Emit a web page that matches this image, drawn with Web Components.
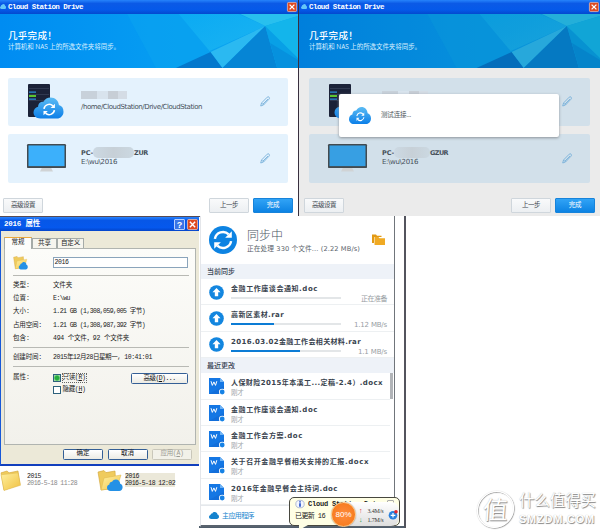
<!DOCTYPE html>
<html lang="zh-CN"><head><meta charset="utf-8"><title>Cloud Station Drive</title>
<style>
html,body{margin:0;padding:0}
body{width:600px;height:531px;overflow:hidden;background:#fff;font-family:"Open Sans","Noto Sans CJK SC",sans-serif;font-size:7px;line-height:1}
</style></head><body><desk-top></desk-top>
<script>
const make=(name,html,init)=>customElements.define(name,class extends HTMLElement{
  constructor(){super();this.attachShadow({mode:'open'});const t=document.createElement('template');
    t.innerHTML=typeof html==='function'?html(this):html;this.shadowRoot.append(t.content.cloneNode(true));}
  connectedCallback(){init&&init(this)}
});
const cloud='M7 21C2.5 21 0 18 0 15c0-3 2-5.2 4.6-5.8C4.600 6 7 4 9.800 4.200 11.500 1.500 14 0 17 0c4.800 0 8 3.300 8.400 7.600C28.500 8.300 30 11 30 14.200 30 18 27 21 23.500 21z';
const arrows='<g fill="none" stroke="#fff" stroke-width="1.700"><path d="M-5.700 -.8A5.800 5.800 0 0 1 4 -4M5.700 .8A5.800 5.800 0 0 1 -4 4"/></g><path fill="#fff" d="M6.200-6.200v4.700H1.500zM-6.200 6.200V1.500H-1.500z"/>';

/* Icons */
make('ui-icon',h=>{
 const n=h.getAttribute('name');
 const I={
  sync:['0 0 30 21',`<linearGradient id="g" x2="0" y2="1"><stop stop-color="#5cbcf4"/><stop offset="1" stop-color="#0c7fe8"/></linearGradient><path fill="url(#g)" d="${cloud}"/><g transform="translate(15.500 12) scale(.85)">${arrows}</g>`],
  cloud:['0 0 30 21',`<path fill="currentColor" d="${cloud}"/>`],
  server:['0 0 37 36',`<rect width="22" height="33" rx="1" fill="#1b2238"/><path fill="#303950" d="M1 4h20v1H1zM1 10h20v1H1zM1 16h20v1H1z"/><path fill="#2b8ed8" d="M1 7.500h7v1.200H1zM1 14.500h7v1.200H1z"/><path fill="#5cc431" d="M1 11h7v2H1z"/><linearGradient id="g" x2="0" y2="1"><stop stop-color="#5cbcf4"/><stop offset="1" stop-color="#0c7fe8"/></linearGradient><g transform="translate(5.500 13.500)"><path fill="url(#g)" d="${cloud}"/><g transform="translate(15.700 12) scale(.92)">${arrows}</g></g>`],
  monitor:['0 0 39 29','<path fill="#d0d3d5" d="M15 24h9l2 4H13z"/><rect width="39" height="24.500" rx="1.200" fill="#434b50"/><rect x="1.500" y="1.500" width="36" height="21" fill="var(--screen,#3cb0fb)"/>'],
  pencil:['0 0 10 11','<path fill="none" stroke="#74afd9" stroke-width=".85" d="M.7 10 1.500 7 7.200 1.200Q8.200.2 9.100 1.200 10 2.200 9 3.200L3.500 9zM1.600 7l1.900 2M3 8 8 3"/>'],
  folder:['0 0 21 22','<linearGradient id="g" x2="1" y2="1"><stop stop-color="#fff0a0"/><stop offset="1" stop-color="#f0c040"/></linearGradient><path fill="#efcb5d" stroke="#d2a234" stroke-width=".6" d="M1 3 7 1l2 2 9-2 2 14L4 21z"/><path fill="url(#g)" stroke="#ddb44a" stroke-width=".5" d="M1 5 18 3l2.500 13L4 21.500z"/>'],
  synced:['0 0 26 22','<linearGradient id="g" x2="1" y2="1"><stop stop-color="#fff0a0"/><stop offset="1" stop-color="#f2c64c"/></linearGradient><path fill="#efcb5d" stroke="#d2a234" stroke-width=".6" d="M1 2 7 .6l2 2 9-1.600 1 17L4 20z"/><path fill="url(#g)" stroke="#ddb44a" stroke-width=".5" d="M4 20 7 8l17-3-4 13z"/><g transform="translate(10 9.500) scale(.52 .55)"><path fill="#2491e6" d="'+cloud+'"/></g>'],
  refresh:['-14 -14 28 28','<circle r="14" fill="#0d83e2"/><g transform="scale(1.420)">'+arrows+'</g>'],
  up:['-8 -8 16 16','<circle r="7.800" fill="#1386df"/><path fill="#fff" d="M0-4.700 4.300-.2H1.800V4H-1.800V-.2H-4.300z"/>'],
  orange:['0 0 13 12','<path fill="#e29a16" d="M0 .5h4l1 1.200h4.500V3H2v6H0z"/><path fill="#f0aa24" d="M2.500 3h4l1 1.200H13V11H2.500z"/>'],
  word:['0 0 16 17','<path fill="#1477e4" d="M0 0h11l4 4v12H0z"/><path fill="#70b4f5" d="M11 0v4h4z"/><path fill="#1065d0" d="M0 16 15 8v8z" opacity=".5"/><path d="M2 3.200 3.300 7.400 4.900 3.900 6.500 7.400 7.800 3.200" fill="none" stroke="#fff" stroke-width="1"/><circle cx="13.200" cy="14" r="3.200" fill="#fff"/><circle cx="13.200" cy="14" r="2.400" fill="#1682e5"/>'],
  close:['0 0 10 10','<rect x=".4" y=".4" width="9.200" height="9.200" rx="1.200" fill="#df4a21" stroke="#f2c7b8" stroke-width=".7"/><path stroke="#fff" stroke-width="1.300" d="m2.600 2.600 4.800 4.800m0-4.800L2.600 7.400"/>'],
  info:['0 0 10 10','<circle cx="5" cy="4.500" r="4.200" fill="#f4f7ff" stroke="#8d9cc4" stroke-width=".7"/><path stroke="#1a49c8" stroke-width="1.600" d="M5 3.700v3.700M5 1.300v1.500"/>'],
  plus:['0 0 10 10','<circle cx="5" cy="5.300" r="4.300" fill="#2a80dc"/><path stroke="#fff" stroke-width="1.200" d="M5 3v4.600M2.700 5.300h4.600"/><circle cx="8" cy="1.800" r="1.800" fill="#e3252b"/>'],
  facets:['0 0 300 54',`<linearGradient id="b" x2="1"><stop stop-color="#008cf2"/><stop offset=".5" stop-color="#059bf2"/><stop offset="1" stop-color="#0ba6ee"/></linearGradient><linearGradient id="l" x2="1" y2="1"><stop stop-color="#0db1f5"/><stop offset="1" stop-color="#25bdf2"/></linearGradient><path fill="url(#b)" d="M0 0h300v54H0z"/><path fill="#0aa4f0" opacity=".6" d="M128 0 157 54H180L267 12 242 0z"/><path fill="url(#l)" d="M180 0 211 37 267 12 240 0z" opacity=".6"/><path fill="#0478cd" d="M177 54 212 38 224 54z"/><path fill="#2bb9f1" d="M212 38 267 12 224 54z"/><path fill="#0685d5" d="M267 12 224 54H279z"/><path fill="#08a0e6" d="M267 12 279 54H300V44z"/><path fill="#28c0ee" d="M242 0H300V2L267 12z"/><path fill="#13b5eb" d="M267 12 300 2V44z"/><path fill="#0587d8" opacity=".6" d="M279 54 272 29 300 46V54z"/>`]
 };
 return `<style>:host{display:block;flex:none}svg{display:block;width:100%;height:100%;overflow:visible}</style><svg viewBox="${I[n][0]}" preserveAspectRatio="none">${I[n][1]}</svg>`;
});

make('push-button','<style>:host{display:flex;align-items:center;justify-content:center;box-sizing:border-box;width:40px;height:15px;border:1px solid #cfd6dc;border-radius:1px;background:linear-gradient(#f9fafb,#eceff2);color:#3f4850;font-size:6.500px}:host([primary]){background:linear-gradient(#31a3f6,#0c83e3);border-color:#1783da;color:#fff}</style><slot></slot>');

make('drive-card','<style>:host{display:grid;grid-template-columns:73px 1fr 10px;padding-right:18px;height:48.500px;background:var(--card,#e4f2fd);border-radius:2px;box-sizing:border-box}.i{padding:var(--ip)}.t{padding-top:12px;display:flex;flex-direction:column;color:#46505a}.p{align-self:center;width:10px;height:11px}</style><div class="i"><slot name="icon"></slot></div><div class="t"><slot></slot></div><ui-icon class="p" name="pencil"></ui-icon>');

/* Setup wizard window */
make('drive-window',h=>`<style>
:host{display:flex;flex-direction:column;box-sizing:border-box;background:var(--body,#fff);font-size:7px}
.bar{display:flex;align-items:center;height:13.500px;background:linear-gradient(#2683fb,#0b5ae6 25%,#0559e9 70%,#0349cf);color:#fff;font:bold 7.500px "Liberation Mono",monospace;flex:none;padding-left:var(--off)}
.bar .c{width:6px;height:5px;color:#64c6f8;margin-right:2px}.bar .x{width:10px;height:10px;margin-left:auto;margin-right:1.500px}
.hero{display:grid;height:54px;flex:none}.hero>*{grid-area:1/1}.hero ui-icon{height:54px;filter:var(--dim)}
.copy{z-index:1;padding:15.500px 0 0 calc(8px + var(--off));color:#fff}.h{font-size:9.500px;line-height:13px;font-weight:500}.s{font-size:6.500px;line-height:10px;color:#d8efff}
.cards{display:flex;flex-direction:column;gap:8px;padding:10px 10px 0 calc(8px + var(--off))}
.l{line-height:10px;height:9.500px;font-size:7px;font-family:"DejaVu Sans",sans-serif;display:flex}
.b{font-weight:bold;font-size:6.500px}.m{height:11px;border-radius:5px;background:linear-gradient(90deg,#ccd9e3,#c7d0d7,#cbd8e1);margin-top:-1px}
.mask{width:46px;height:8px;background:linear-gradient(90deg,#c8d1da 0 35%,#d8e3ed 35% 58%,#c7ced6 58% 80%,#d4dce5 80%);margin-top:1px}
.srv{width:37px;height:36px}.mon{width:39px;height:28.500px}
.foot{display:flex;gap:4px;padding:15.500px 5px 0 calc(3px + var(--off))}.foot>:first-child{margin-right:auto}
</style>
<div class="bar"><ui-icon class="c" name="cloud"></ui-icon><fit-text w="75">Cloud Station Drive</fit-text><ui-icon class="x" name="close"></ui-icon></div>
<div class="hero"><ui-icon name="facets"></ui-icon><div class="copy"><div class="h"><fit-text w="49">几乎完成！</fit-text></div><div class="s"><fit-text w="112">计算机和 NAS 上的所选文件夹将同步。</fit-text></div></div></div>
<div class="cards"><drive-card style="--ip:6.500px 0 0 20px"><ui-icon slot="icon" class="srv" name="server"></ui-icon><div class="l" style="height:12px"><div class="mask"></div></div><div class="l"><fit-text w="121">/home/CloudStation/Drive/CloudStation</fit-text></div></drive-card>
<drive-card style="--ip:10px 0 0 19px"><ui-icon slot="icon" class="mon" name="monitor"></ui-icon><div class="l b" style="padding-top:1.500px"><fit-text w="12">PC-</fit-text><div class="m" style="width:${h.getAttribute('gap')}px"></div><fit-text w="${h.getAttribute('tw')}">${h.getAttribute('tail')}</fit-text></div><div class="l"><fit-text w="36">E:\\wu\\2016</fit-text></div></drive-card></div>
<div class="foot"><push-button><fit-text w="24">高级设置</fit-text></push-button><push-button><fit-text w="18">上一步</fit-text></push-button><push-button primary><fit-text w="12.500">完成</fit-text></push-button></div>`);

/* File properties */
make('xp-button','<style>:host{display:flex;align-items:center;justify-content:center;box-sizing:border-box;width:40px;height:11px;border:1px solid #345f96;border-radius:1.500px;background:linear-gradient(#fff,#ecebe4);color:#111}:host([off]){border-color:#c9c7ba;color:#9b9a92;background:#f2f1e9}</style><slot></slot>');
make('props-window',()=>{const r=(k,kw,v,w)=>`<div class="r"><span class="k"><fit-text w="${kw}">${k}</fit-text></span><fit-text w="${w}">${v}</fit-text></div>`;return `<style>
:host{display:flex;flex-direction:column;box-sizing:border-box;background:#ece9d8;border-left:1px solid #1758d8;border-bottom:2px solid #113fbd;font:6.500px/8px "Liberation Mono","Noto Sans CJK SC",monospace;color:#222}
.bar{height:14px;margin-left:-1px;background:linear-gradient(#2883ff,#0757e7 25%,#0558ed 75%,#0445ca);display:flex;align-items:center;gap:2px;padding:0 1px 0 4px;color:#fff;font-weight:bold;font-size:7.500px;flex:none}.bar ui-icon{width:11px;height:11px}.q{margin-left:auto;width:9px;height:9px;border:1px solid #b6cfff;border-radius:1px;background:#3974e6;text-align:center;font:bold 9px/10px "Liberation Sans",sans-serif}
.tabs{display:flex;align-items:flex-end;padding:5.500px 0 0 3px;height:11px}.tab{box-sizing:border-box;height:10px;border:1px solid #a5aba8;border-bottom:0;background:#f6f5ee;display:flex;justify-content:center;align-items:center;width:25px;padding-top:1px}.tab.on{width:28px;height:12px;border-top:1.500px solid #ecaa3c;background:#fdfdfb;margin-bottom:-1px;z-index:1;padding-top:0}
.page{height:197px;box-sizing:border-box;margin:0 3px;border:1px solid #b0b4b0;background:linear-gradient(#fcfcf9,#f2f1eb);padding:7px 7px 0 8px;display:flex;flex-direction:column}
.top{display:flex;gap:24.500px;height:19px}.top ui-icon{width:15px;height:14px}.in{height:11px;box-sizing:border-box;width:136px;border:1px solid #8aa4bb;background:#fff;padding:1px 1px;line-height:8px;margin-top:1px}
hr{border:0;border-top:1px solid #b8b9b4;margin:0;width:176px}.r{display:flex;height:13.200px;align-items:center}.k{width:40px}
.rows{padding:4px 0 1.500px}.ck{display:flex;align-items:center;gap:2px;height:12px}.box{width:5.500px;height:5.500px;border:1px solid #2d617c;background:#fff}.box.on{background:radial-gradient(#24ad3d 45%,#a1dba3 75%)}.attr{display:flex;padding-top:5px}.foc{outline:.5px dotted #666}.attr xp-button{width:57px;margin-left:auto;margin-top:1px}
.foot{display:flex;justify-content:flex-end;gap:4.500px;padding:4px 7px 0 0}
</style><div class="bar"><fit-text w="36">2016 属性</fit-text><span class="q">?</span><ui-icon name="close"></ui-icon></div>
<div class="tabs"><div class="tab on"><fit-text w="13">常规</fit-text></div><div class="tab"><fit-text w="13">共享</fit-text></div><div class="tab" style="width:27px"><fit-text w="19">自定义</fit-text></div></div>
<div class="page"><div class="top"><ui-icon name="synced"></ui-icon><div class="in"><fit-text w="14">2016</fit-text></div></div><hr>
<div class="rows">${r('类型:',17,'文件夹',19)}${r('位置:',17,'E:\\wu',17)}${r('大小:',17,'1.21 GB (1,308,059,005 字节)',92)}${r('占用空间:',29,'1.21 GB (1,308,987,392 字节)',92)}${r('包含:',17,'494 个文件，92 个文件夹',76)}</div><hr>
<div style="padding:3px 0 2px">${r('创建时间:',29,'2015年12月28日星期一, 10:41:01',99)}</div><hr>
<div class="attr"><span class="k" style="line-height:12px"><fit-text w="17">属性:</fit-text></span><div><div class="ck"><span class="box on"></span><fit-text class="foc" w="23">只读(<u>R</u>)</fit-text></div><div class="ck"><span class="box"></span><fit-text w="23">隐藏(<u>H</u>)</fit-text></div></div><xp-button><fit-text w="32">高级(<u>D</u>)...</fit-text></xp-button></div></div>
<div class="foot"><xp-button><fit-text w="13">确定</fit-text></xp-button><xp-button><fit-text w="13">取消</fit-text></xp-button><xp-button off><fit-text w="23">应用(<u>A</u>)</fit-text></xp-button></div>`});

make('file-tile','<style>:host{display:flex;align-items:flex-start;font:6.500px/7px "Liberation Mono",monospace;color:#222}.t{display:flex;flex-direction:column;margin-top:3px;color:#888}.n{color:#222}:host([sel]) .t{background:#ebe8d9;color:#222}</style><slot name="icon"></slot><div class="t"><slot></slot></div>');

/* Sync status */
make('section-head','<style>:host{display:flex;align-items:center;height:15px;padding-left:6px;background:#eef2f8;color:#344050;font-size:7px;font-weight:500}</style><slot></slot>');
make('sync-row',h=>`<style>:host{display:grid;grid-template-columns:22px 110px 1fr;height:26.400px;box-sizing:border-box;border-bottom:1px solid #edf0f2;padding:4px 7px 0 8px}ui-icon{width:15px;height:15px;margin-top:1.500px;grid-row:1/3}.n{grid-column:2/4;height:12.500px;font:bold 7px/12px "DejaVu Sans","Noto Sans CJK SC",sans-serif;color:#39434e}.p{height:2px;background:#e3e6e8}.p i{display:block;height:2px;background:#0c7cd5;width:${h.getAttribute('p')}%}.s{text-align:right;color:#979da3;margin-top:-1px;font:7px/7px "DejaVu Sans","Noto Sans CJK SC",sans-serif}</style><ui-icon name="up"></ui-icon><div class="n"><slot></slot></div><div class="p"><i></i></div><div class="s"><slot name="s"></slot></div>`);
make('recent-row','<style>:host{display:grid;grid-template-columns:22px 1fr;grid-template-rows:10px 9px;height:26.400px;box-sizing:border-box;border-bottom:1px solid #edf0f2;padding:5px 0 0 8px}ui-icon{grid-row:1/3;width:16px;height:17px}.n{font:bold 7px/11px "DejaVu Sans","Noto Sans CJK SC",sans-serif;color:#39434e}.s{color:#a2a7ac;font-size:6.500px;line-height:9px}</style><ui-icon name="word"></ui-icon><div class="n"><slot></slot></div><div class="s"><fit-text w="12.500">刚才</fit-text></div>');
make('sync-panel',()=>{const rr=(t,w)=>`<recent-row><fit-text w="${w}">${t}</fit-text></recent-row>`;const sr=(t,w,p,s,sw)=>`<sync-row p="${p}"><fit-text w="${w}">${t}</fit-text><fit-text slot="s" w="${sw}">${s}</fit-text></sync-row>`;return `<style>
:host{display:flex;flex-direction:column;background:#fff;box-sizing:border-box;border-right:1.500px solid #70757b;border-left:1px solid #e4e6ea;border-bottom:2px solid #59636e;font-size:7px}
.top{display:grid;grid-template-columns:38px 1fr 14px;padding:10px 8px 0 8px;height:48px;box-sizing:border-box}.big{width:28px;height:28px}.h{font-size:12px;line-height:14px;color:#4a555f;font-weight:300;padding-top:3px}.s{font:6.700px/11px "DejaVu Sans","Noto Sans CJK SC",sans-serif;color:#59626a;padding-top:1px}.f{width:13px;height:12px;margin-top:8px}
.recent{display:grid;grid-template-columns:1fr 3px;padding-right:1px;height:132px}.sb{height:26px;background:#b1b4b8}
.foot{display:flex;align-items:center;gap:3px;border-top:1px solid #e5e8ec;padding-left:8px;flex:1;color:#1583ce}.foot ui-icon{width:10px;height:7px}
</style><div class="top"><ui-icon class="big" name="refresh"></ui-icon><div><div class="h"><fit-text w="36">同步中</fit-text></div><div class="s"><fit-text w="113">正在处理 330 个文件... (2.22 MB/s)</fit-text></div></div><ui-icon class="f" name="orange"></ui-icon></div>
<section-head><fit-text w="28">当前同步</fit-text></section-head>
${sr('金融工作座谈会通知.doc',87,0,'正在准备',26)}${sr('高新区素材.rar',53,39,'1.12 MB/s',33)}${sr('2016.03.02金融工作会相关材料.rar',130,63,'1.1 MB/s',29)}
<section-head><fit-text w="28">最近更改</fit-text></section-head>
<div class="recent"><div>${rr('人保财险2015年本溪工...定稿-2.4）.docx',152)}${rr('金融工作座谈会通知.doc',87)}${rr('金融工作会方案.doc',72)}${rr('关于召开金融早餐相关安排的汇报.docx',138)}${rr('2016年金融早餐会主持词.doc',107)}</div><div class="sb"></div></div>
<div class="foot"><ui-icon name="cloud"></ui-icon><fit-text w="32">主应用程序</fit-text></div>`});

make('tray-balloon',`<style>:host{display:flex;flex-direction:column;gap:2px;box-sizing:border-box;border:1.500px solid #48483f;border-radius:5px;background:#ffffe5;padding:2px 5px;font:7px/11px "Liberation Mono","Noto Sans CJK SC",monospace;color:#222}.a{display:flex;gap:3px;font:bold 7px/7px "Liberation Mono",monospace;align-items:center;height:9px}.a ui-icon{width:10px;height:9px}.x{margin-left:auto;border:.7px solid #aaa;border-radius:1px;width:7px;height:7px;line-height:7px;text-align:center;font-size:8px;font-weight:normal}
:host::after{content:"";position:absolute;left:9px;top:27px;width:9px;height:5px;background:#ffffe5;clip-path:polygon(0 0,100% 0,0 100%)}</style><div class="a"><ui-icon name="info"></ui-icon><fit-text w="76">Cloud Station Drive</fit-text><span class="x">×</span></div><fit-text w="30">已更新 16</fit-text>`);
make('speed-gauge',`<style>:host{display:grid;grid-template-columns:25px 1fr 11px;align-items:center;background:linear-gradient(#fff,#dedede) 12px 0/calc(100% - 12px) 100% no-repeat;border-radius:8px;color:#333;font:6px/6px "Liberation Serif",serif}.o{display:flex;align-items:center;justify-content:center;width:25px;height:25px;box-sizing:border-box;border:1px solid #fbc17e;border-radius:50%;background:radial-gradient(#ff8b3d,#f47715);color:#fff;font:8px/8px "Liberation Sans",sans-serif;box-shadow:0 0 1px #666}.v{padding:2px 0 0 3px}.v div{display:flex;gap:5px;height:8.500px;align-items:center}b{font-size:7px;color:#d4262b}b.g{color:#259b46}ui-icon{width:10px;height:10px}</style><span class="o"><fit-text w="16">80%</fit-text></span><div class="v"><div><b>↑</b><fit-text w="16">3.4M/s</fit-text></div><div><b class="g">↓</b><fit-text w="16">1.7M/s</fit-text></div></div><ui-icon name="plus"></ui-icon>`);
make('site-mark',`<style>:host{display:flex;align-items:center;gap:5px;color:#fff;text-shadow:.7px .7px .8px #8a8a8a,0 0 1px #bbb}.c{width:37px;height:37px;box-sizing:border-box;border:1.500px solid #fff;border-radius:50%;box-shadow:.7px .7px 1px #999,inset .7px .7px 1px #999,0 0 1px #bbb;display:flex;align-items:center;justify-content:center;font-size:25px;font-weight:400;transform:skewX(-4deg)}.t{display:flex;flex-direction:column}.z{font-size:15.500px;line-height:20px;font-weight:400}.e{font:bold 11px/19px "Liberation Sans",sans-serif}</style><span class="c">值</span><div class="t"><span class="z"><fit-text w="77">什么值得买</fit-text></span><span class="e"><fit-text w="76">SMZDM.COM</fit-text></span></div>`);

make('connect-dialog','<style>:host{display:flex;align-items:center;gap:10px;box-sizing:border-box;padding-left:10px;background:#fff;border-radius:2px;box-shadow:0 1px 3px #8b9298;color:#4b535b;font-size:6.500px}ui-icon{width:22px;height:17px}</style><ui-icon name="sync"></ui-icon><fit-text w="30">测试连接...</fit-text>');

make('desk-top',`<style>:host{display:block;position:relative;width:600px;height:531px;overflow:hidden;background:#fff}
:host>*,.w{position:absolute}
.w1{left:0;top:0;width:299px;height:216.500px;--off:0px;border-right:1.500px solid #38303f;border-bottom:1.500px solid #564b55}
.w2{left:299px;top:0;width:301px;height:216px;--off:2px;--body:#ebebeb;--card:#d2e0ea;--screen:#379fe3;--dim:brightness(.91)}
.dl{left:339px;top:94px;width:220px;height:43px}
.pr{left:0;top:217px;width:199px;height:248.500px}
.f1{left:0;top:470px;gap:6px}.f2{left:97px;top:470px;gap:2px}
.sp{left:200px;top:216px;width:195px;height:311px}
.edge{left:404px;top:216px;width:1.500px;height:312px;background:#53545d}.base{left:199px;top:526px;width:207px;height:2px;background:#4f5d6b}
.tb{left:289px;top:497px;width:111px;height:29px}.sg{left:331px;top:502px;width:68px;height:24px}
.sm{left:477px;top:490px}
</style>
<drive-window class="w w1" gap="41" tail="ZUR" tw="14"></drive-window>
<drive-window class="w w2" gap="36" tail="GZUR" tw="18"></drive-window>
<connect-dialog class="w dl"></connect-dialog>
<props-window class="w pr"></props-window>
<file-tile class="w f1"><ui-icon slot="icon" name="folder" style="width:21px;height:21px"></ui-icon><fit-text w="14" style="color:#222">2015</fit-text><fit-text w="50">2016-5-18 11:28</fit-text></file-tile>
<file-tile sel class="w f2"><ui-icon slot="icon" name="synced" style="width:26px;height:22px"></ui-icon><fit-text w="14">2016</fit-text><fit-text w="50">2016-5-18 12:02</fit-text></file-tile>
<div class="w base"></div><div class="w edge"></div><sync-panel class="w sp"></sync-panel>
<tray-balloon class="w tb"></tray-balloon><speed-gauge class="w sg"></speed-gauge><site-mark class="w sm"></site-mark>`);

/* Tracks its text out or in to a set width */
make('fit-text','<style>:host{display:inline-block;white-space:nowrap}</style><span><slot></slot></span>',h=>{
  const s=h.shadowRoot.querySelector('span'),w=+h.getAttribute('w'),n=[...h.textContent].length;
  s.style.letterSpacing='0px';const d=(w-s.getBoundingClientRect().width)/n;s.style.letterSpacing=d+'px';
});
</script></body></html>
